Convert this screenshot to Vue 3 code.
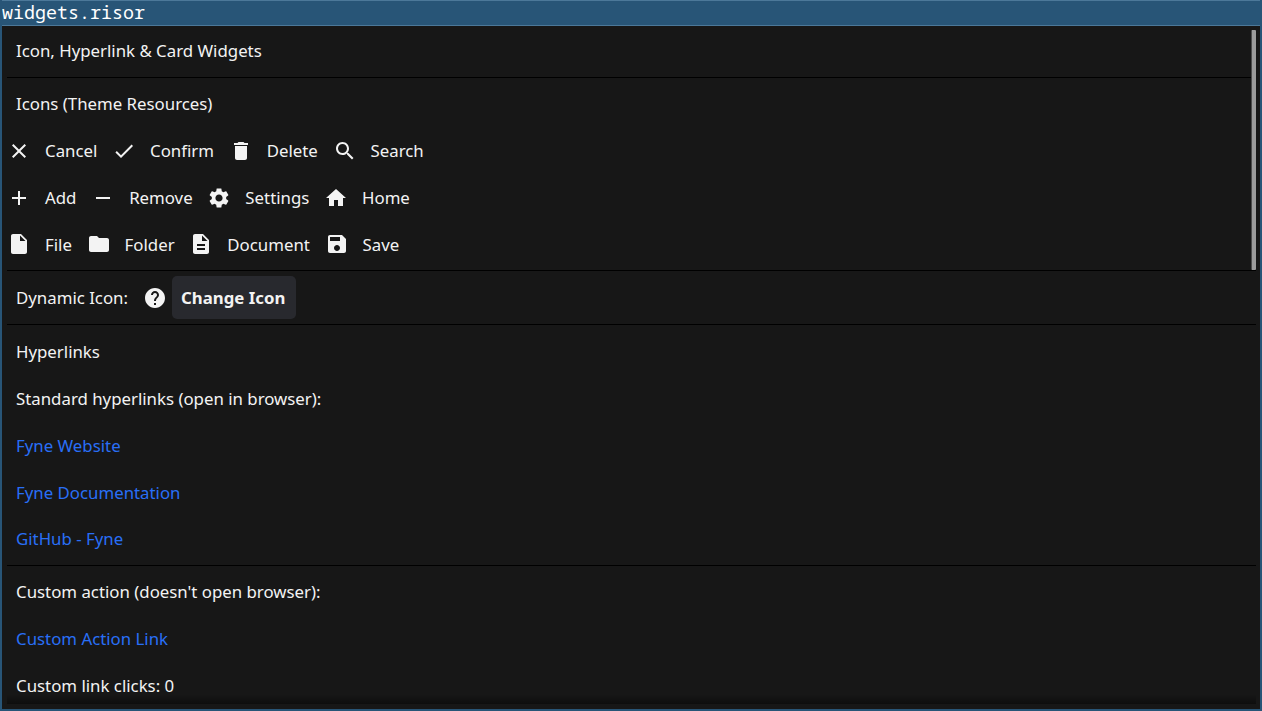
<script setup>
import { ref } from 'vue';

const paths = {
  cancel: 'M19 6.41L17.59 5 12 10.59 6.41 5 5 6.41 10.59 12 5 17.59 6.41 19 12 13.41 17.59 19 19 17.59 13.41 12z',
  confirm: 'M9 16.17L4.83 12l-1.42 1.41L9 19 21 7l-1.41-1.41z',
  delete: 'M6 19c0 1.1.9 2 2 2h8c1.1 0 2-.9 2-2V7H6v12zM19 4h-3.5l-1-1h-5l-1 1H5v2h14V4z',
  search: 'M15.5 14h-.79l-.28-.27C15.41 12.59 16 11.11 16 9.5 16 5.91 13.09 3 9.5 3S3 5.91 3 9.5 5.91 16 9.5 16c1.61 0 3.09-.59 4.23-1.57l.27.28v.79l5 4.99L20.49 19l-4.99-5zm-6 0C7.01 14 5 11.99 5 9.5S7.01 5 9.5 5 14 7.01 14 9.5 11.99 14 9.5 14z',
  add: 'M19 13h-6v6h-2v-6H5v-2h6V5h2v6h6v2z',
  remove: 'M19 13H5v-2h14v2z',
  settings: 'M19.14 12.94c.04-.3.06-.61.06-.94 0-.32-.02-.64-.07-.94l2.03-1.58c.18-.14.23-.41.12-.61l-1.92-3.32c-.12-.22-.37-.29-.59-.22l-2.39.96c-.5-.38-1.03-.7-1.62-.94l-.36-2.54c-.04-.24-.24-.41-.48-.41h-3.84c-.24 0-.43.17-.47.41l-.36 2.54c-.59.24-1.13.57-1.62.94l-2.39-.96c-.22-.08-.47 0-.59.22L2.74 8.87c-.12.21-.08.47.12.61l2.03 1.58c-.05.3-.09.63-.09.94s.02.64.07.94l-2.03 1.58c-.18.14-.23.41-.12.61l1.92 3.32c.12.22.37.29.59.22l2.39-.96c.5.38 1.03.7 1.62.94l.36 2.54c.05.24.24.41.48.41h3.84c.24 0 .44-.17.47-.41l.36-2.54c.59-.24 1.13-.56 1.62-.94l2.39.96c.22.08.47 0 .59-.22l1.92-3.32c.12-.22.07-.47-.12-.61l-2.01-1.58zM12 15.6c-1.98 0-3.6-1.62-3.6-3.6s1.62-3.6 3.6-3.6 3.6 1.62 3.6 3.6-1.62 3.6-3.6 3.6z',
  home: 'M10 20v-6h4v6h5v-8h3L12 3 2 12h3v8z',
  file: 'M6 2c-1.1 0-1.99.9-1.99 2L4 20c0 1.1.89 2 1.99 2H18c1.1 0 2-.9 2-2V8l-6-6H6zm7 7V3.5L18.5 9H13z',
  folder: 'M10 4H4c-1.1 0-1.99.9-1.99 2L2 18c0 1.1.9 2 2 2h16c1.1 0 2-.9 2-2V8c0-1.1-.9-2-2-2h-8l-2-2z',
  document: 'M14 2H6c-1.1 0-1.99.9-1.99 2L4 20c0 1.1.89 2 1.99 2H18c1.1 0 2-.9 2-2V8l-6-6zm2 16H8v-2h8v2zm0-4H8v-2h8v2zm-3-5V3.5L18.5 9H13z',
  save: 'M17 3H5c-1.11 0-2 .9-2 2v14c0 1.1.89 2 2 2h14c1.1 0 2-.9 2-2V7l-4-4zm-5 16c-1.66 0-3-1.34-3-3s1.34-3 3-3 3 1.34 3 3-1.34 3-3 3zm3-10H5V5h10v4z',
  question: 'M12 2C6.48 2 2 6.48 2 12s4.48 10 10 10 10-4.48 10-10S17.52 2 12 2zm1 17h-2v-2h2v2zm2.07-7.75l-.9.92C13.45 12.9 13 13.5 13 15h-2v-.5c0-1.1.45-2.1 1.17-2.83l1.24-1.26c.37-.36.59-.86.59-1.41 0-1.1-.9-2-2-2s-2 .9-2 2H8c0-2.21 1.79-4 4-4s4 1.79 4 4c0 .88-.36 1.68-.93 2.25z',
};

const iconRows = [
  [['cancel', 'Cancel'], ['confirm', 'Confirm'], ['delete', 'Delete'], ['search', 'Search']],
  [['add', 'Add'], ['remove', 'Remove'], ['settings', 'Settings'], ['home', 'Home']],
  [['file', 'File'], ['folder', 'Folder'], ['document', 'Document'], ['save', 'Save']],
];

const links = ['Fyne Website', 'Fyne Documentation', 'GitHub - Fyne'];

const clicks = ref(0);
const dynamicIcon = ref('question');
const changeIcon = () => {
  const names = Object.keys(paths);
  dynamicIcon.value = names[(names.indexOf(dynamicIcon.value) + 1) % names.length];
};
</script>

<template>
  <div class="window">
    <header class="title">widgets.risor</header>
    <main class="scroll">
      <div class="label">Icon, Hyperlink &amp; Card Widgets</div>
      <hr>
      <div class="label">Icons (Theme Resources)</div>
      <div class="icons">
        <div v-for="(row, idx) in iconRows" :key="idx" class="row">
          <template v-for="[name, text] in row" :key="name">
            <svg class="icon" viewBox="0 0 24 24"><path :d="paths[name]" /></svg>
            <span class="label">{{ text }}</span>
          </template>
        </div>
      </div>
      <hr>
      <div class="row dynamic">
        <span class="label">Dynamic Icon:</span>
        <svg class="icon" viewBox="0 0 24 24"><path :d="paths[dynamicIcon]" /></svg>
        <button class="btn" @click="changeIcon">Change Icon</button>
      </div>
      <hr>
      <div class="links">
        <div class="label">Hyperlinks</div>
        <div class="label">Standard hyperlinks (open in browser):</div>
        <a v-for="link in links" :key="link" class="label link">{{ link }}</a>
      </div>
      <hr>
      <div class="label">Custom action (doesn't open browser):</div>
      <a class="label link" @click="clicks++">Custom Action Link</a>
      <div class="label">Custom link clicks: {{ clicks }}</div>
      <div class="bar"></div>
      <div class="shadow"></div>
    </main>
  </div>
</template>

<style>
body {
  margin: 0;
  background: #171717;
}
</style>

<style scoped>
.window {
  box-sizing: border-box;
  width: 1262px;
  height: 711px;
  display: flex;
  flex-direction: column;
  border: 2px solid #285577;
  border-top: 0;
  background: #171717;
  overflow: hidden;
}
.title {
  box-sizing: border-box;
  flex: none;
  height: 26px;
  margin: 0 -2px;
  padding-left: 1px;
  border: 1px solid #4c7899;
  background: #285577;
  color: #fff;
  font: 18.33px/22px "Noto Sans Mono", "DejaVu Sans Mono", monospace;
}
.scroll {
  position: relative;
  flex: 1;
  display: flex;
  flex-direction: column;
  gap: 5px;
  margin: 4px 4px 5px 5px;
  overflow: hidden;
}
.icons,
.links {
  flex: none;
  display: flex;
  flex-direction: column;
  gap: 5px;
}
.icons {
  margin-bottom: -1px;
}
.icons .row:last-child .icon {
  margin-bottom: 2px;
}
.links {
  margin-top: 1px;
}
.links .link:last-child {
  margin-top: -1px;
}
.label {
  flex: none;
  box-sizing: border-box;
  height: 42px;
  padding: 0 9.7px 0 9px;
  color: #f3f3f3;
  font: 16.82px/42px "Noto Sans", sans-serif;
  white-space: nowrap;
}
.link {
  color: #296ff6;
  cursor: pointer;
}
.row {
  flex: none;
  display: flex;
  align-items: center;
  gap: 5px;
}
.icon {
  flex: none;
  width: 24px;
  height: 24px;
  fill: #f3f3f3;
}
.dynamic .icon {
  margin-top: 1px;
}
hr {
  flex: none;
  width: 100%;
  height: 1px;
  margin: 0;
  border: 0;
  background: #000;
}
.btn {
  width: 124px;
  height: 43px;
  padding: 0 1px 0 0;
  border: 0;
  border-radius: 5px;
  background: #28292e;
  color: #f3f3f3;
  font: bold 16.8px/42px "Noto Sans", sans-serif;
}
.bar {
  position: absolute;
  top: 0;
  right: 0;
  width: 5px;
  height: 240px;
  border-radius: 1px;
  background: linear-gradient(90deg, #4c4c4c 1px, #9b9b9b 1px);
}
.shadow {
  position: absolute;
  bottom: 0;
  left: 0;
  width: 100%;
  height: 10px;
  background: linear-gradient(rgba(0, 0, 0, 0), rgba(0, 0, 0, 0.4));
}
</style>
